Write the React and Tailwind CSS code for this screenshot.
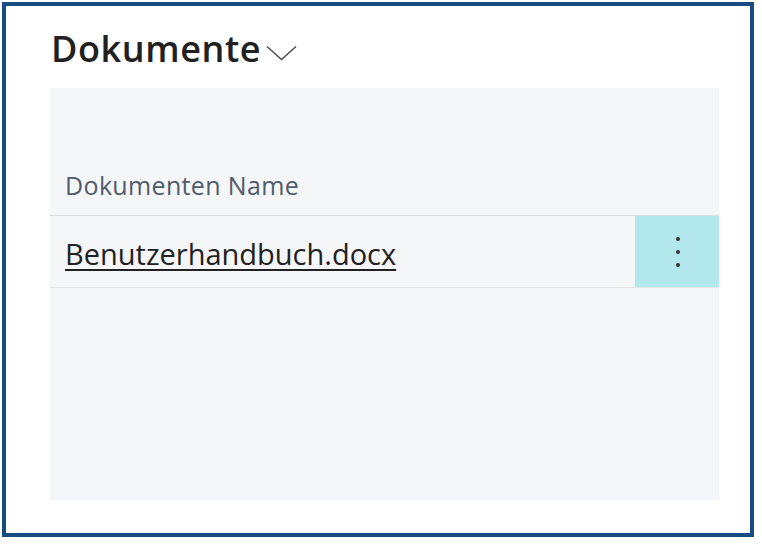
export default function App() {
  return (
    <div className="w-[762px] h-[548px] bg-white p-[2px]" style={{ fontFamily: '"Open Sans", "Noto Sans", sans-serif' }}>
      <div className="w-[752px] h-[535px] border-4 border-[#174b82] bg-white pl-[44px] pr-[31px] flex flex-col">
        <div className="h-[82px] flex items-center pt-[4px]">
          <h1 className="text-[36px] font-semibold text-[#212121] leading-none tracking-[0.6px] ml-[1px]">Dokumente</h1>
          <svg width="31" height="16" viewBox="0 0 31 16" className="ml-[5px] mt-[8px]" fill="none">
            <path d="M1 1.5 L15.5 14.5 L30 1.5" stroke="#505050" strokeWidth="1.6" />
          </svg>
        </div>
        <div className="w-[669px] h-[412px] bg-[#f5f6f8] flex flex-col">
          <div className="h-[128px] border-b border-[#dcdde0] flex items-end pl-[15px] pb-[17px]">
            <span className="text-[25px] text-[#505c6d] leading-none tracking-[0.35px]">Dokumenten Name</span>
          </div>
          <div className="h-[72px] border-b border-[#e3e4e7] flex">
            <div className="flex-1 flex items-center pl-[15px] pt-[4px]">
              <span className="text-[29px] text-[#212121] underline underline-offset-[4px] decoration-[1.5px] leading-none">Benutzerhandbuch.docx</span>
            </div>
            <div className="w-[84px] bg-[#b2e8ec] flex flex-col items-center justify-center gap-[9px] pl-[2px]">
              <span className="w-[4px] h-[4px] rounded-full bg-[#333]"></span>
              <span className="w-[4px] h-[4px] rounded-full bg-[#333]"></span>
              <span className="w-[4px] h-[4px] rounded-full bg-[#333]"></span>
            </div>
          </div>
        </div>
      </div>
    </div>
  );
}
